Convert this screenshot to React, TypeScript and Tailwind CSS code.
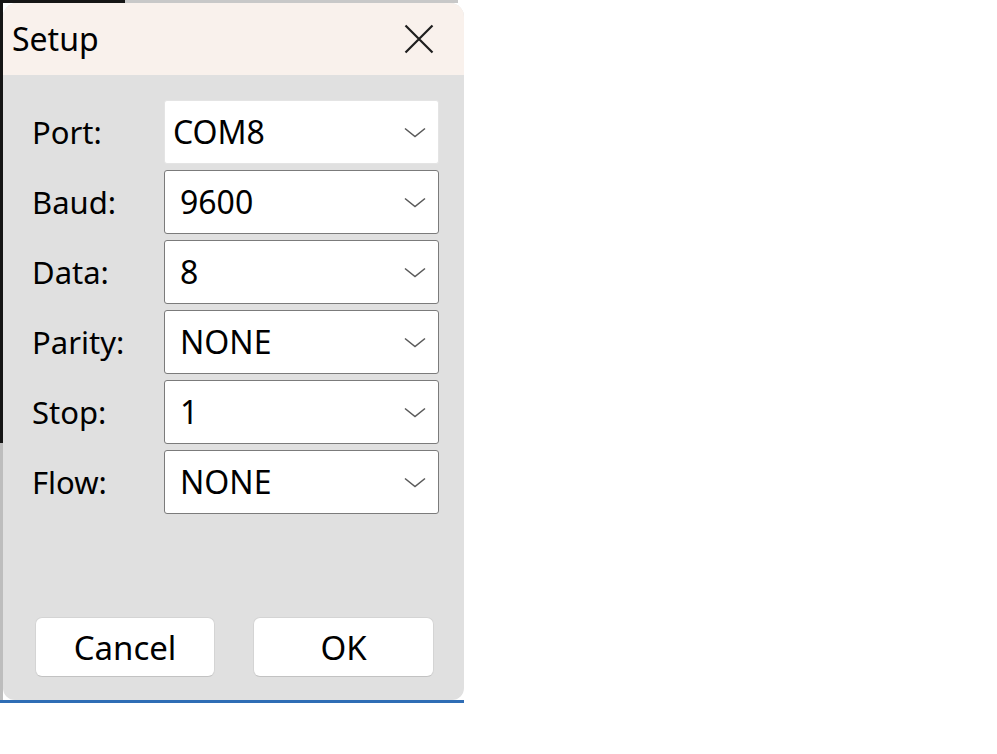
import React from 'react';

const rows = [
  { label: 'Port:', value: 'COM8', editable: true },
  { label: 'Baud:', value: '9600' },
  { label: 'Data:', value: '8' },
  { label: 'Parity:', value: 'NONE' },
  { label: 'Stop:', value: '1' },
  { label: 'Flow:', value: 'NONE' },
];

const Chevron: React.FC = () => (
  <svg width="22" height="11" viewBox="0 0 22 11" className="shrink-0">
    <path d="M1 1.5 L11 9.5 L21 1.5" fill="none" stroke="#5a5a5a" strokeWidth="1.6" />
  </svg>
);

const App: React.FC = () => {
  return (
    <div className="min-h-screen bg-white" style={{ fontFamily: '"Noto Sans", "Open Sans", sans-serif' }}>
      {/* bits of the window behind the dialog */}
      <div className="h-[3px] w-[458px] bg-[linear-gradient(to_right,#151515_0,#151515_125px,#c8c8c8_125px)]" />
      <div className="flex w-[464px]">
        <div className="w-[3px] bg-[linear-gradient(to_bottom,#151515_0,#151515_440px,#bdbdbd_440px)]" />
        <div className="flex h-[697px] w-[461px] flex-col overflow-hidden rounded-t-[14px] rounded-b-[12px] bg-[#e0e0e0] text-black">
          {/* title bar */}
          <div className="flex h-[72px] items-center justify-between bg-[#f9f1ec] pl-[9px] pr-[30px]">
            <span className="text-[32px] leading-none">Setup</span>
            <svg width="30" height="30" viewBox="0 0 30 30">
              <path d="M1.5 1.5 L28.5 28.5 M28.5 1.5 L1.5 28.5" stroke="#1e1e1e" strokeWidth="2.2" />
            </svg>
          </div>

          {/* fields */}
          <div className="flex flex-col gap-[6px] pl-[29px] pt-[25px]">
            {rows.map((r) => (
              <div key={r.label} className="flex items-center">
                <span className="w-[132px] text-[31px] leading-none">{r.label}</span>
                <div
                  className={`flex h-[64px] w-[275px] items-center justify-between rounded-[3px] bg-white pr-[12px] ${
                    r.editable ? 'border border-[#e4e4e4] pl-[8px]' : 'border border-[#7b7b7b] pl-[15px]'
                  }`}
                >
                  <span className="text-[32px] leading-none">{r.value}</span>
                  <Chevron />
                </div>
              </div>
            ))}
          </div>

          <div className="flex-1" />

          {/* buttons */}
          <div className="flex gap-[38px] pb-[23px] pl-[32px]">
            <button className="h-[60px] w-[180px] rounded-[7px] border border-[#d4d4d4] border-b-[#c2c2c2] bg-white text-[33px] leading-none">
              Cancel
            </button>
            <button className="h-[60px] w-[181px] rounded-[7px] border border-[#d4d4d4] border-b-[#c2c2c2] bg-white text-[33px] leading-none">
              OK
            </button>
          </div>
        </div>
      </div>
      <div className="h-[3px] w-[464px] bg-[#2f6db5]" />
    </div>
  );
};

export default App;
